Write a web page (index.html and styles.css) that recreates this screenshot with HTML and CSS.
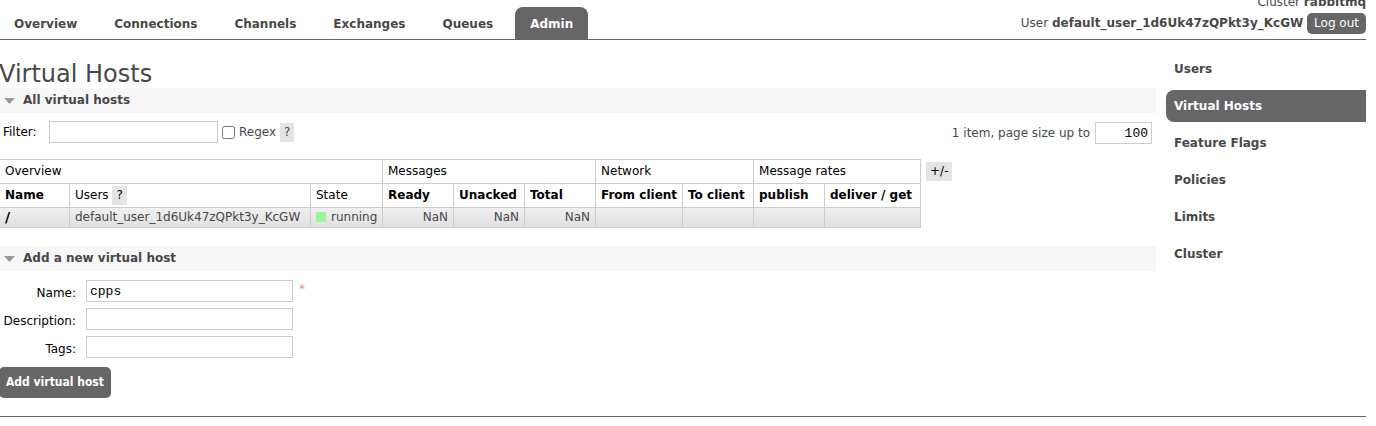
FILE: index.html
```html
<!DOCTYPE html>
<html lang="en">
<head>
<meta charset="utf-8">
<title>Virtual Hosts</title>
<link rel="stylesheet" href="styles.css">
</head>
<body>
<header class="header">
  <nav class="tabs">
    <a href="#">Overview</a>
    <a href="#">Connections</a>
    <a href="#">Channels</a>
    <a href="#">Exchanges</a>
    <a href="#">Queues</a>
    <a href="#" class="selected">Admin</a>
  </nav>
  <ul class="session">
    <li>Cluster <b>rabbitmq</b></li>
    <li>User <b>default_user_1d6Uk47zQPkt3y_KcGW</b> <button type="button" class="logout">Log out</button></li>
  </ul>
</header>
<div class="layout">
  <main class="main">
    <h1>Virtual Hosts</h1>
    <section class="section">
      <h2><svg class="arrow" viewBox="0 0 11 6" aria-hidden="true"><path d="M0 0H11L5.500 6Z"/></svg>All virtual hosts</h2>
      <div class="filter">
        <label class="filter-label" for="filter">Filter:</label>
        <input class="text filter-input" type="text" id="filter">
        <input class="check" type="checkbox" id="regex">
        <label for="regex">Regex</label>
        <button type="button" class="help">?</button>
        <div class="paging">
          <label for="pagesize">1 item, page size up to</label>
          <input class="text page-input" type="text" id="pagesize" value="100">
        </div>
      </div>
      <div class="table-row">
        <table class="list">
          <colgroup>
            <col class="c-name"><col class="c-users"><col class="c-state">
            <col class="c-num"><col class="c-num"><col class="c-num">
            <col class="c-from"><col class="c-num"><col class="c-num"><col class="c-get">
          </colgroup>
          <thead>
            <tr><th colspan="3">Overview</th><th colspan="3">Messages</th><th colspan="2">Network</th><th colspan="2">Message rates</th></tr>
            <tr>
              <th><b>Name</b></th><th>Users <button type="button" class="help">?</button></th><th>State</th>
              <th><b>Ready</b></th><th><b>Unacked</b></th><th><b>Total</b></th>
              <th><b>From client</b></th><th><b>To client</b></th><th><b>publish</b></th><th><b>deliver / get</b></th>
            </tr>
          </thead>
          <tbody>
            <tr>
              <td><a href="#">/</a></td><td>default_user_1d6Uk47zQPkt3y_KcGW</td><td><span class="status"></span>running</td>
              <td class="r">NaN</td><td class="r">NaN</td><td class="r">NaN</td>
              <td></td><td></td><td></td><td></td>
            </tr>
          </tbody>
        </table>
        <button type="button" class="help columns">+/-</button>
      </div>
    </section>
    <section class="section">
      <h2><svg class="arrow" viewBox="0 0 11 6" aria-hidden="true"><path d="M0 0H11L5.500 6Z"/></svg>Add a new virtual host</h2>
      <form class="form">
        <div class="fields">
          <label for="name">Name:</label>
          <div class="field"><input class="text" type="text" id="name" value="cpps"><span class="required">*</span></div>
          <label for="description">Description:</label>
          <div class="field"><input class="text" type="text" id="description"></div>
          <label for="tags">Tags:</label>
          <div class="field"><input class="text" type="text" id="tags"></div>
        </div>
        <button type="submit" class="submit">Add virtual host</button>
      </form>
    </section>
  </main>
  <nav class="side">
    <a href="#">Users</a>
    <a href="#" class="selected">Virtual Hosts</a>
    <a href="#">Feature Flags</a>
    <a href="#">Policies</a>
    <a href="#">Limits</a>
    <a href="#">Cluster</a>
  </nav>
</div>
<footer class="footer"></footer>
</body>
</html>
```
FILE: styles.css
```css
* { box-sizing: border-box; }
body {
  margin: 0;
  padding-right: 10px;
  background: #fff;
  color: #484848;
  font: 12px/17px Verdana, "DejaVu Sans", sans-serif;
  overflow: hidden;
}
a { color: inherit; text-decoration: none; font-weight: bold; }
button { font: inherit; color: inherit; border: 0; margin: 0; }

.header {
  display: flex;
  justify-content: space-between;
  align-items: flex-end;
  border-bottom: 1px solid #666;
}
.tabs { display: flex; gap: 7px; }
.tabs a { padding: 9px 15px 6px; border-radius: 8px 8px 0 0; }
.tabs a:first-child { padding-left: 14px; }
.tabs .selected, .side .selected { background: #666; color: #fff; }
.session { list-style: none; margin: -8px 0 0; padding: 0 0 5px; text-align: right; }
.session li { height: 21px; line-height: 21px; }
.logout {
  height: 21px;
  padding: 0 7px;
  border-radius: 5px;
  background: #666;
  color: #fff;
  line-height: 21px;
  vertical-align: top;
}

.layout { display: flex; gap: 10px; }
.main { flex: 1; min-width: 0; padding-top: 20px; }
h1 { margin: 0 0 0 -1px; padding-top: 1px; font-size: 24px; line-height: 27px; font-weight: normal; }
h2 {
  display: flex;
  align-items: center;
  gap: 8px;
  margin: 0;
  padding: 4px;
  background: #f7f7f7;
  font-size: 12px;
  line-height: 17px;
}
.arrow { width: 11px; height: 6px; fill: #999; }
.section { margin-bottom: 18px; }

.text {
  height: 22px;
  margin: 0;
  padding: 0 3px;
  border: 1px solid #ccc;
  background: #fff;
  color: #000;
  font: 13px "Liberation Mono", monospace;
}
.help { padding: 1px 4px; background: #e4e4e4; }
.filter { display: flex; align-items: center; padding: 7px 4px 15px 3px; }
.filter-label { width: 46px; color: #000; }
.filter-input { width: 169px; }
.check { width: 13px; height: 13px; margin: 0 4px; }
.filter .help { margin-left: 4px; }
.paging { display: flex; align-items: center; gap: 5px; margin-left: auto; padding-top: 2px; }
.page-input { width: 57px; text-align: right; }

.table-row { display: flex; align-items: flex-start; gap: 5px; margin-left: -1px; }
.list { table-layout: fixed; width: 922px; border-collapse: collapse; white-space: nowrap; }
.list th, .list td { height: 24px; padding: 0 5px; border: 1px solid #ccc; text-align: left; font-weight: normal; }
.list th { color: #000; }
.list td { height: 20px; }
.list tbody tr { background: linear-gradient(#f0f0f0, #dfdfdf); }
.list td a { color: #000; font-size: 14px; }
.list td.r { text-align: right; }
.c-name { width: 70px; }
.c-users { width: 241px; }
.c-state { width: 72px; }
.c-num { width: 71px; }
.c-from { width: 87px; }
.c-get { width: 96px; }
.status { display: inline-block; width: 10px; height: 10px; margin-right: 5px; background: #98f898; vertical-align: -1px; }
.columns { margin-top: 3px; color: #000; }

.form { padding-top: 9px; }
.fields { display: grid; grid-template-columns: 76px 1fr; gap: 6px 10px; }
.fields label { color: #000; text-align: right; padding-top: 5px; white-space: nowrap; }
.field { display: flex; gap: 6px; }
.field .text { width: 207px; }
.required { padding-top: 1px; color: #f88; }
.submit {
  margin: 9px 0 0 -1px;
  padding: 7px;
  border-radius: 5px;
  background: #666;
  color: #fff;
  font-family: "DejaVu Sans Condensed", "DejaVu Sans", sans-serif;
  font-weight: bold;
}
.side { width: 200px; display: flex; flex-direction: column; gap: 5px; padding-top: 13px; }
.side a { padding: 8px 8px 7px; border-radius: 8px 0 0 8px; }
.footer { border-top: 1px solid #666; }
```
